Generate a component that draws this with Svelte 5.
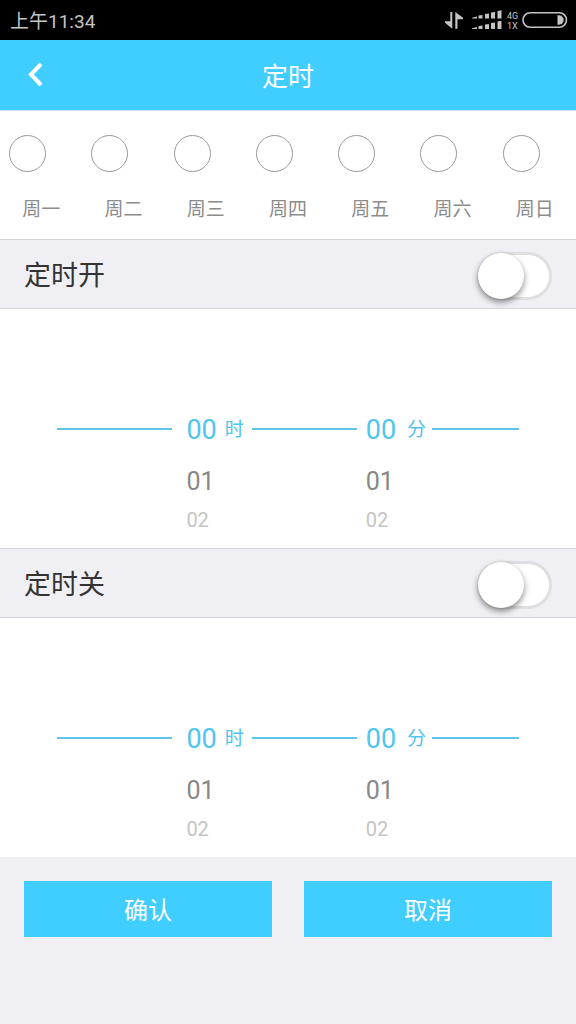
<script>
  const DAYS = ['周一', '周二', '周三', '周四', '周五', '周六', '周日']

  let days = $state(DAYS.map((name) => ({ name, on: false })))
  let timers = $state([
    { id: 'on', label: '定时开', active: false, hour: 0, minute: 0 },
    { id: 'off', label: '定时关', active: false, hour: 0, minute: 0 },
  ])

  const pad = (n) => String(n).padStart(2, '0')

  function step(timer, key, delta) {
    const size = key === 'hour' ? 24 : 60
    timer[key] = Math.min(size - 1, Math.max(0, timer[key] + delta))
  }

  // Values below the selected one, as far as the wheel goes.
  function below(timer, key, offset) {
    const size = key === 'hour' ? 24 : 60
    const n = timer[key] + offset
    return n < size ? pad(n) : ''
  }

  function reset() {
    days.forEach((d) => (d.on = false))
    timers.forEach((t) => {
      t.active = false
      t.hour = 0
      t.minute = 0
    })
  }
</script>

<div class="screen">
  <div class="status">
    <span class="clock">上午11:34</span>
    <svg width="124" height="24" viewBox="0 0 124 24" aria-hidden="true">
      <g fill="#c4c4c4">
        <path d="M6.300 4h2v16.800L1 14.800v-1.600h5.300z" />
        <path d="M11.300 20.800h2.200v-9.600H19V9.800L11.300 4z" />
        <path d="M28 9.800l5-1.300v1.900h-5zM34.500 7.500l4-.5v3.400h-4zM41 6l4-.5v4.900h-4zM47 4.500l4-.5v6.400h-4zM53.500 3l4-.8v8.200h-4z" />
        <path d="M28 20.300l5-1.300v1.900h-5zM34.500 18l4-.5v3.400h-4zM41 16.500l4-.5v4.900h-4zM47 15l4-.5v6.400h-4zM53.500 13.500l4-.8v8.200h-4z" />
        <text x="63" y="11" font-size="9">4G</text>
        <text x="63" y="21" font-size="9">1X</text>
        <path d="M113.500 7.300h1.500a4.700 4.700 0 0 1 0 9.400h-1.500z" />
      </g>
      <rect x="79" y="4.800" width="43.500" height="14.400" rx="7.200" fill="none" stroke="#c4c4c4" stroke-width="1.600" />
    </svg>
  </div>

  <header>
    <button class="back" type="button" aria-label="返回">
      <svg width="18" height="26" viewBox="0 0 18 26">
        <path d="M14 2L4 12.500l10 10.500" fill="none" stroke="#fff" stroke-width="4" />
      </svg>
    </button>
    <h1>定时</h1>
  </header>

  <div class="days">
    {#each days as day}
      <label class="day">
        <input type="checkbox" bind:checked={day.on} />
        <span>{day.name}</span>
      </label>
    {/each}
  </div>

  {#each timers as timer (timer.id)}
    <section>
      <label class="bar">
        <span>{timer.label}</span>
        <input class="switch" type="checkbox" role="switch" bind:checked={timer.active} />
      </label>

      <div class="picker">
        <span class="line"></span>
        <button class="value hour-col" type="button" onclick={() => step(timer, 'hour', -1)}>
          {pad(timer.hour)}<span class="unit">时</span>
        </button>
        <span class="line"></span>
        <button class="value minute-col" type="button" onclick={() => step(timer, 'minute', -1)}>
          {pad(timer.minute)}<span class="unit">分</span>
        </button>
        <span class="line"></span>

        {#each [1, 2] as offset}
          <button class="next hour-col n{offset}" type="button" onclick={() => step(timer, 'hour', offset)}>
            {below(timer, 'hour', offset)}
          </button>
          <button class="next minute-col n{offset}" type="button" onclick={() => step(timer, 'minute', offset)}>
            {below(timer, 'minute', offset)}
          </button>
        {/each}
      </div>
    </section>
  {/each}

  <footer>
    <button type="button">确认</button>
    <button type="button" onclick={reset}>取消</button>
  </footer>
</div>

<style>
  :global(body) { background: #efeff4; }
  .screen {
    min-height: 100vh;
    background: #efeff4;
    color: #333;
    font-family: Roboto, "Noto Sans CJK SC", sans-serif;
  }
  button {
    margin: 0;
    padding: 0;
    border: 0;
    background: none;
    color: inherit;
    font: inherit;
    cursor: pointer;
  }

  .status {
    display: flex;
    align-items: center;
    justify-content: space-between;
    height: 40px;
    padding: 0 8px 0 10px;
    background: #000;
    color: #c4c4c4;
  }
  .clock { padding-top: 4px; font-size: 19px; line-height: 24px; }

  header {
    display: grid;
    grid-template-columns: 72px 1fr 72px;
    align-items: center;
    height: 70px;
    background: #40cdff;
    color: #fff;
    border-bottom: 1px solid #c8e6f2;
  }
  .back { display: flex; align-items: center; justify-content: center; height: 70px; }
  h1 { margin: 0; padding-top: 4px; text-align: center; font-size: 26px; line-height: 40px; font-weight: 400; }

  .days {
    display: grid;
    grid-template-columns: repeat(7, 1fr);
    padding: 24px 0 15px;
    background: #fff;
  }
  .day { display: flex; flex-direction: column; gap: 24px; color: #8c8c8c; cursor: pointer; }
  .day input {
    appearance: none;
    box-sizing: border-box;
    width: 37px;
    height: 37px;
    margin: 0 0 0 9px;
    border: 1px solid #999;
    border-radius: 50%;
    background: #fff;
  }
  .day input:checked { border-color: #40cdff; background: #40cdff; }
  .day span { text-align: center; font-size: 19px; line-height: 28px; }

  .bar {
    display: flex;
    align-items: center;
    justify-content: space-between;
    box-sizing: border-box;
    height: 70px;
    padding: 3px 24px 0;
    border-top: 1px solid #d5d5d9;
    border-bottom: 1px solid #d5d5d9;
    font-size: 27px;
    line-height: 40px;
  }
  .switch {
    appearance: none;
    position: relative;
    box-sizing: border-box;
    width: 75px;
    height: 48px;
    margin: 0;
    border: 3px solid #dfdfe1;
    border-radius: 24px;
    background: #fff;
  }
  .switch::before {
    content: '';
    position: absolute;
    top: -2px;
    left: -2px;
    width: 46px;
    height: 46px;
    border-radius: 50%;
    background: #fff;
    box-shadow: 0 3px 6px #0007;
  }
  .switch:checked { border-color: #40cdff; background: #40cdff; }
  .switch:checked::before { left: 25px; }

  .picker {
    display: grid;
    grid-template-columns: 115fr 80px 104fr 75px 87fr;
    grid-template-rows: 48px 52px 24px;
    align-items: center;
    padding: 96px 57px 19px;
    background: #fff;
  }
  .line { height: 2px; background: #5fc5e8; }
  .value {
    display: flex;
    align-items: center;
    padding-top: 2px;
    color: #50c5ee;
    font-size: 27px;
    line-height: 32px;
  }
  .unit { font-size: 19px; line-height: 28px; }
  .hour-col { grid-column: 2; padding-left: 14px; }
  .hour-col .unit { margin-left: 8px; }
  .minute-col { grid-column: 4; padding-left: 9px; }
  .minute-col .unit { margin-left: 11px; }
  .next { padding-top: 6px; text-align: left; color: #888; }
  .n1 { font-size: 25px; line-height: 32px; }
  .n2 { font-size: 20px; line-height: 24px; color: #c4c4c4; }

  footer { display: grid; grid-template-columns: 1fr 1fr; gap: 32px; padding: 24px; }
  footer button {
    height: 56px;
    padding-top: 4px;
    background: #40cdff;
    color: #fff;
    font-size: 24px;
    line-height: 36px;
  }
</style>
